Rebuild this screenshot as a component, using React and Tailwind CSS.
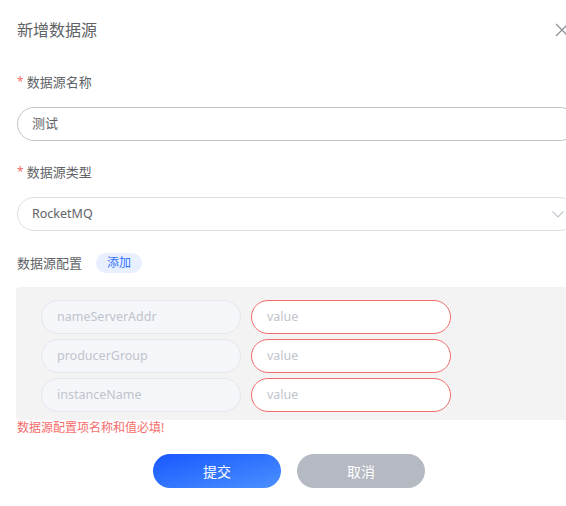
const rows = ['nameServerAddr', 'producerGroup', 'instanceName'];

export default function App() {
  return (
    <div
      className="w-[566px] h-[506px] overflow-hidden bg-white text-[#606266]"
      style={{ fontFamily: '"Noto Sans", "Noto Sans CJK SC", sans-serif' }}
    >
      <div className="w-[600px] pl-[17px]">
        <div className="flex items-center justify-between w-[552px] pt-[13px] h-[46px]">
          <span className="text-[16px] text-[#606266] leading-[22px]">新增数据源</span>
          <svg width="14" height="14" viewBox="0 0 14 14" className="text-[#909399]">
            <path d="M1 1 L13 13 M13 1 L1 13" stroke="currentColor" strokeWidth="1.3" fill="none" />
          </svg>
        </div>

        <div className="mt-[26px] text-[13px] leading-[20px] flex items-center">
          <span className="text-[#f56c6c] text-[12px] mr-[3px]">*</span>
          数据源名称
        </div>
        <div className="mt-[15px] h-[34px] w-[560px] rounded-full border border-[#c0c4cc] flex items-center px-[14px] text-[13px] text-[#606266]">
          测试
        </div>

        <div className="mt-[21px] text-[13px] leading-[20px] flex items-center">
          <span className="text-[#f56c6c] text-[12px] mr-[3px]">*</span>
          数据源类型
        </div>
        <div className="mt-[15px] h-[34px] w-[560px] rounded-full border border-[#dcdfe6] flex items-center pl-[14px] pr-[12px] text-[12.5px] text-[#606266]">
          <span className="flex-1">RocketMQ</span>
          <svg width="12" height="7" viewBox="0 0 12 7" className="text-[#c0c4cc]">
            <path d="M0.5 0.5 L6 6 L11.5 0.5" stroke="currentColor" strokeWidth="1.1" fill="none" />
          </svg>
        </div>

        <div className="mt-[22px] flex items-center gap-[14px]">
          <span className="text-[13px] leading-[20px]">数据源配置</span>
          <span className="h-[20px] px-[11px] rounded-full bg-[#e8f0ff] text-[#3370ff] text-[12px] leading-[20px]">添加</span>
        </div>

        <div className="mt-[14px] -ml-px w-[580px] bg-[#f3f3f3] rounded-tl-[4px] rounded-bl-[4px] pl-[25px] pt-[13px] pb-[8px] flex flex-col gap-[5px]">
          {rows.map((r) => (
            <div key={r} className="flex gap-[10px]">
              <div className="w-[200px] h-[34px] rounded-full border border-[#e4e7ed] bg-[#f5f6fa] flex items-center px-[15px] text-[12.5px] text-[#c0c4cc]">
                {r}
              </div>
              <div className="w-[200px] h-[34px] rounded-full border border-[#f56c6c] bg-white flex items-center px-[15px] text-[12.5px] text-[#c0c4cc]">
                value
              </div>
            </div>
          ))}
        </div>
        <div className="text-[12px] leading-[14px] text-[#f56c6c] mt-[1px]">数据源配置项名称和值必填!</div>

        <div className="mt-[19px] flex gap-[16px] pl-[136px]">
          <button className="w-[128px] h-[34px] rounded-full bg-gradient-to-br from-[#1a55ff] to-[#4c8fff] text-white text-[14px]">
            提交
          </button>
          <button className="w-[128px] h-[34px] rounded-full bg-[#b4b9c2] text-white text-[14px]">
            取消
          </button>
        </div>
      </div>
    </div>
  );
}
